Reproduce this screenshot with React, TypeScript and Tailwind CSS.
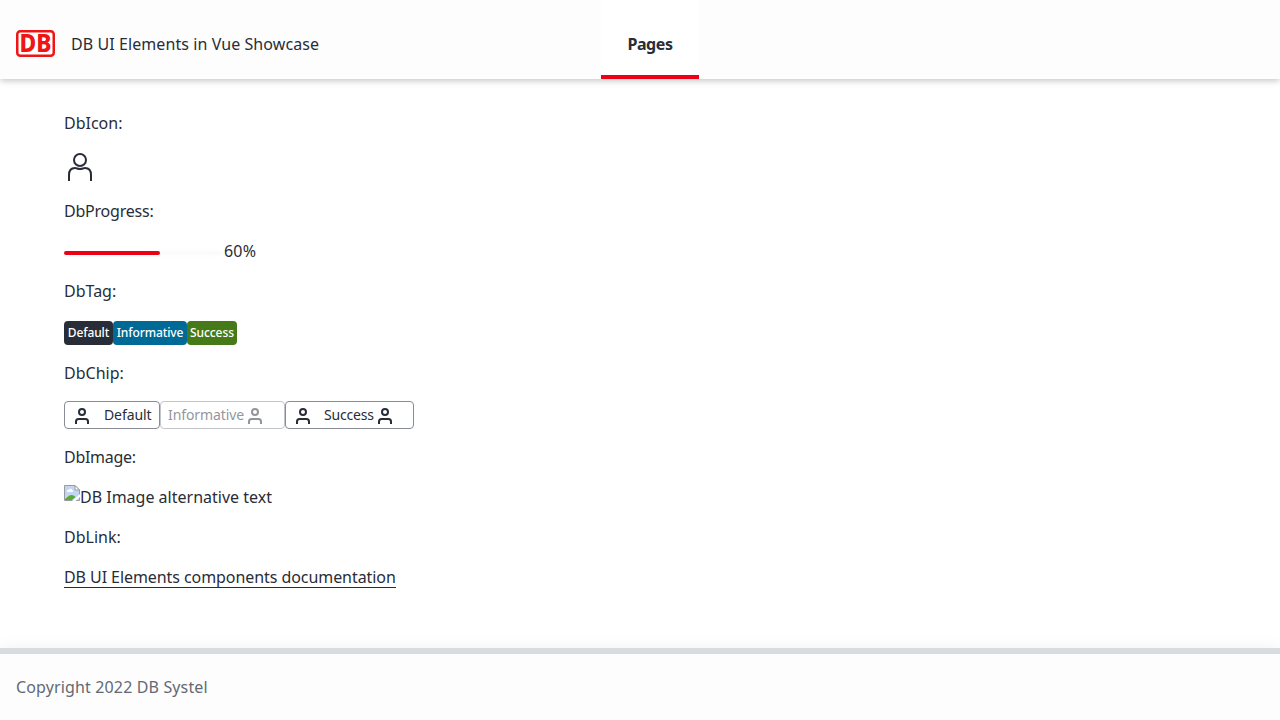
import type { ReactNode } from "react";

function PersonIcon() {
  return (
    <svg viewBox="0 0 32 32" className="size-8 shrink-0" fill="none" stroke="currentColor" strokeWidth="2">
      <circle cx="16" cy="9" r="6" />
      <path d="M5 30v-6c0-4.500 2.500-7 6-7 1.800 0 2.700 1 5 1s3.200-1 5-1c3.500 0 6 2.500 6 7v6" />
    </svg>
  );
}

function SmallPersonIcon() {
  return (
    <svg viewBox="0 0 20 20" className="mt-px size-5 shrink-0" fill="none" stroke="currentColor" strokeWidth="2">
      <circle cx="10" cy="6" r="3" />
      <path d="M4 18v-2.500A2.500 2.500 0 0 1 6.500 13h7a2.500 2.500 0 0 1 2.500 2.500V18" />
    </svg>
  );
}

function Logo() {
  return (
    <svg viewBox="0 0 39 27" className="h-[27px] w-[39px] shrink-0 overflow-visible">
      <rect x="1.250" y="1.250" width="36.500" height="24.500" rx="3" fill="white" stroke="#f01414" strokeWidth="2.500" />
      <text x="3.500" y="22" fontFamily="Noto Sans, sans-serif" fontWeight="800" fontSize="24" textLength="32" lengthAdjust="spacingAndGlyphs" fill="#f01414">
        DB
      </text>
    </svg>
  );
}

function BrokenImageIcon() {
  return (
    <svg viewBox="0 0 16 16" className="size-4 shrink-0">
      <path d="M.5.500h10.500l4.500 4.500v10.500H.500z" fill="#c3d5f5" stroke="#9b9b9b" />
      <path d="M3 6c0-1.500 1.500-1.500 2-1 .5-2 3-1.500 3 0 1.500 0 1.500 2 0 2H4C3.300 7 3 6.500 3 6z" fill="white" />
      <path d="M1 15v-1c2-1 3.500-4 6.500-4 2 0 3 1 4 2l-3.500 3z" fill="#59aa36" />
      <path d="M11 .5V5h4.500z" fill="white" stroke="#9b9b9b" />
      <path d="M8 16l8-7v3l-4.500 4z" fill="white" />
    </svg>
  );
}

function Label({ children }: { children: ReactNode }) {
  return <p className="flex h-6 items-center">{children}</p>;
}

export default function App() {
  return (
    <div className="flex h-[720px] w-full flex-col overflow-hidden bg-white font-['Noto_Sans',sans-serif] text-base leading-6 whitespace-nowrap text-[#282d37]">
      <header className="relative z-10 grid h-[79px] shrink-0 grid-cols-[601px_98px_1fr] bg-[#fdfdfd] shadow-[0_2px_6px_rgba(0,0,0,0.22)]">
        <div className="flex items-center gap-4 pt-2 pl-4">
          <Logo />
          <span className="tracking-[0.08px]">DB UI Elements in Vue Showcase</span>
        </div>
        <nav className="flex items-center justify-center border-b-4 border-[#ec0016] bg-white pt-3 font-bold tracking-[-0.4px]">
          Pages
        </nav>
      </header>

      <main className="flex flex-1 flex-col items-start gap-4 px-16 pt-8">
        <Label>DbIcon:</Label>
        <PersonIcon />
        <Label>
          <span className="tracking-[-0.22px]">DbProgress:</span>
        </Label>
        <div className="flex h-6 items-center">
          <div className="mt-1 h-1 w-40 rounded-full bg-[#fafbfb] shadow-[0_0_12px_rgba(0,0,0,0.02)]">
            <div className="h-full w-[60%] rounded-full bg-[#ec0016]" />
          </div>
          <span className="tracking-[0.2px]">60%</span>
        </div>
        <Label>DbTag:</Label>
        <div className="flex pt-0.5 text-[12px] font-medium tracking-[-0.1px] text-white">
          <span className="flex h-6 w-[49px] items-center justify-center rounded bg-[#282d37]">Default</span>
          <span className="flex h-6 w-[74px] items-center justify-center rounded bg-[#006a96]">Informative</span>
          <span className="flex h-6 w-[50px] items-center justify-center rounded bg-[#467a18]">Success</span>
        </div>
        <Label>DbChip:</Label>
        <div className="flex text-[14px] tracking-[-0.1px]">
          <span className="flex h-7 w-24 items-center rounded border border-[#878c96] pl-[7px]">
            <SmallPersonIcon />
            <span className="ml-3">Default</span>
          </span>
          <span className="flex h-7 w-[125px] items-center rounded border border-[#878c96] pl-[7px] opacity-50">
            <span className="w-[77px]">Informative</span>
            <SmallPersonIcon />
          </span>
          <span className="flex h-7 w-[129px] items-center rounded border border-[#878c96] pl-[7px]">
            <SmallPersonIcon />
            <span className="ml-[11px] w-[51px] tracking-[-0.2px]">Success</span>
            <SmallPersonIcon />
          </span>
        </div>
        <Label>
          <span className="tracking-[-0.28px]">DbImage:</span>
        </Label>
        <div className="flex h-6 items-start">
          <BrokenImageIcon />
          <span>DB Image alternative text</span>
        </div>
        <Label>DbLink:</Label>
        <a href="#" className="h-[23px] border-b border-[#282d37] tracking-[-0.07px]">
          DB UI Elements components documentation
        </a>
      </main>

      <footer className="flex h-[72px] shrink-0 items-center border-t-6 border-[#d7dce1] bg-[#fdfdfd] pl-4 text-[#646973] shadow-[0_0_16px_rgba(0,0,0,0.06)]">
        <span className="tracking-[0.14px]">Copyright 2022 DB Systel</span>
      </footer>
    </div>
  );
}
